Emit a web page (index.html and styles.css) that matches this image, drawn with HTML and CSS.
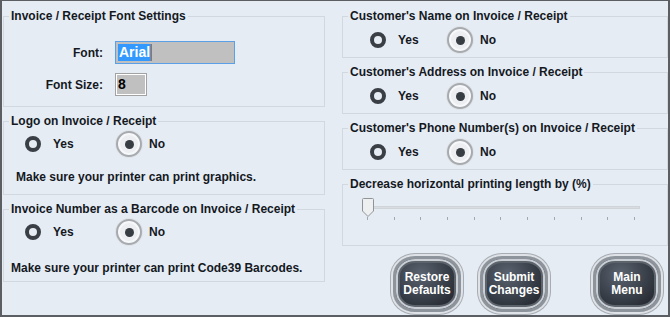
FILE: index.html
```html
<!DOCTYPE html>
<html lang="en">

<head>
    <meta charset="UTF-8">
    <title>Invoice / Receipt Settings</title>
    <link rel="stylesheet" href="styles.css">
</head>

<body>
    <div class="window">
        <div class="column left">
            <fieldset class="group font-group">
                <legend>Invoice / Receipt Font Settings</legend>
                <div class="form-grid">
                    <label for="font">Font:</label>
                    <div class="field field-wide focused" id="font"><span class="selected">Arial</span><span class="caret"></span></div>
                    <label for="fontsize">Font Size:</label>
                    <div class="field field-small" id="fontsize">8</div>
                </div>
            </fieldset>

            <fieldset class="group logo-group">
                <legend>Logo on Invoice / Receipt</legend>
                <div class="radio-row wide">
                    <div class="option"><span class="radio"></span>Yes</div>
                    <div class="option"><span class="radio on"></span>No</div>
                </div>
                <p class="note">Make sure your printer can print graphics.</p>
            </fieldset>

            <fieldset class="group barcode-group">
                <legend>Invoice Number as a Barcode on Invoice / Receipt</legend>
                <div class="radio-row wide">
                    <div class="option"><span class="radio"></span>Yes</div>
                    <div class="option"><span class="radio on"></span>No</div>
                </div>
                <p class="note">Make sure your printer can print Code39 Barcodes.</p>
            </fieldset>
        </div>

        <div class="column right">
            <fieldset class="group small-group">
                <legend>Customer's Name on Invoice / Receipt</legend>
                <div class="radio-row narrow">
                    <div class="option"><span class="radio"></span>Yes</div>
                    <div class="option"><span class="radio on"></span>No</div>
                </div>
            </fieldset>

            <fieldset class="group small-group">
                <legend>Customer's Address on Invoice / Receipt</legend>
                <div class="radio-row narrow">
                    <div class="option"><span class="radio"></span>Yes</div>
                    <div class="option"><span class="radio on"></span>No</div>
                </div>
            </fieldset>

            <fieldset class="group small-group">
                <legend>Customer's Phone Number(s) on Invoice / Receipt</legend>
                <div class="radio-row narrow">
                    <div class="option"><span class="radio"></span>Yes</div>
                    <div class="option"><span class="radio on"></span>No</div>
                </div>
            </fieldset>

            <fieldset class="group slider-group">
                <legend>Decrease horizontal printing length by (%)</legend>
                <div class="slider">
                    <div class="track">
                        <svg class="thumb" width="12" height="19" viewBox="0 0 12 19">
                            <path d="M0.5 1.5 Q0.5 0.5 1.5 0.5 H10.5 Q11.5 0.5 11.5 1.5 V13 L6 18.5 L0.5 13 Z" fill="#eeeff1" stroke="#8f9498" />
                        </svg>
                    </div>
                    <div class="ticks">
                        <span></span><span></span><span></span><span></span><span></span><span></span>
                        <span></span><span></span><span></span><span></span><span></span>
                    </div>
                </div>
            </fieldset>

            <div class="buttons">
                <button class="tv-button restore">Restore<br>Defaults</button>
                <button class="tv-button submit">Submit<br>Changes</button>
                <button class="tv-button menu">Main<br>Menu</button>
            </div>
        </div>
    </div>
</body>

</html>
```

FILE: styles.css
```css
body {
    margin: 0;
    font: bold 11px/14px "Liberation Sans", Arial, sans-serif;
    color: #14191f;
}

.window {
    width: 670px;
    height: 317px;
    box-sizing: border-box;
    background: #e6ecf4;
    border: 2px solid #5b5f64;
    border-top-width: 1px;
    display: grid;
    grid-template-columns: 322px 326px;
    column-gap: 17px;
    padding: 8px 0 0 1px;
}

.column {
    display: flex;
    flex-direction: column;
    gap: 7px;
}

.group {
    margin: 0;
    padding: 0;
    border: 1px solid #d2d8df;
    box-sizing: border-box;
    min-width: 0;
}

.group legend {
    margin-left: 5px;
    padding: 0 2px;
    line-height: 14px;
    font-size: 12px;
}

/* left column */

.font-group {
    height: 98px;
}

.logo-group {
    height: 81px;
}

.barcode-group {
    height: 80px;
}

.form-grid {
    display: grid;
    grid-template-columns: 99px auto;
    column-gap: 12px;
    row-gap: 9px;
    align-items: center;
    justify-items: start;
    margin-top: 18px;
}

.form-grid label {
    justify-self: end;
    font-size: 12px;
}

.field {
    height: 23px;
    box-sizing: border-box;
    background: #c0c0c0;
    border: 1px solid #a2a2a2;
    box-shadow: inset 0 0 0 1px #fff;
    font: bold 14px/19px "Liberation Sans", Arial, sans-serif;
    padding: 1px 2px;
    display: flex;
    align-items: center;
}

.field-wide {
    width: 120px;
}

.field-small {
    width: 32px;
    color: #000;
}

.focused {
    border-color: #5ba0e6;
    box-shadow: none;
}

.selected {
    background: #3399ff;
    color: #fff;
    padding: 0 1px;
    line-height: 17px;
}

.caret {
    width: 1px;
    height: 17px;
    background: #c06a20;
}

.radio-row {
    display: flex;
    margin-top: 3px;
}

.radio-row.wide {
    padding-left: 16px;
}

.radio-row.wide .option:first-child {
    width: 96px;
}

.radio-row.narrow {
    margin-top: 4px;
    padding-left: 22px;
}

.radio-row.narrow .option:first-child {
    width: 82px;
}

.option {
    display: flex;
    align-items: center;
    gap: 7px;
    font-size: 12px;
}

.radio {
    width: 26px;
    height: 26px;
    display: grid;
    place-items: center;
}

.radio::before {
    content: "";
    width: 8px;
    height: 8px;
    border-radius: 50%;
    border: 4px solid #3a3f46;
}

.radio.on {
    border-radius: 50%;
    box-sizing: border-box;
    border: 2px solid #a7abb0;
    background: #eceef1;
    box-shadow: 0 0 0 1px #dfe3e8, inset 0 0 0 2px #f7f8f9;
}

.radio.on::before {
    width: 9px;
    height: 9px;
    border: none;
    background: #383c43;
}

.note {
    margin: 0;
    font-size: 12px;
}

.logo-group .note {
    margin-top: 13px;
    padding-left: 12px;
}

.barcode-group .note {
    margin-top: 16px;
    padding-left: 7px;
}

/* right column */

.small-group {
    height: 49px;
}

.slider-group {
    height: 69px;
}

.slider {
    margin: 15px 0 0 20px;
    width: 277px;
}

.track {
    position: relative;
    height: 3px;
    background: #d9dde2;
    border: 1px solid #cfd4d9;
    box-sizing: border-box;
}

.thumb {
    position: absolute;
    left: -2px;
    top: -9px;
}

.ticks {
    display: flex;
    justify-content: space-between;
    margin: 8px 0 0 4px;
    width: 268px;
}

.ticks span {
    width: 1px;
    height: 3px;
    background: #a3a8ad;
}

.buttons {
    display: flex;
    margin-top: 3px;
}

.tv-button {
    width: 68px;
    height: 56px;
    box-sizing: border-box;
    border-radius: 22px / 20px;
    border: 3px solid #8e949b;
    background: radial-gradient(ellipse at 40% 30%, #5a6370 0%, #2c3139 70%, #1d2127 100%);
    box-shadow: 0 0 0 2px #dfe3e8, 0 0 0 3px #a6acb3, inset 0 0 0 2px #c9ced4, inset 0 0 0 4px #5d636b;
    color: #fff;
    font: bold 12px/13px "Liberation Sans", Arial, sans-serif;
    padding: 0;
}

.restore {
    margin-left: 51px;
}

.submit {
    margin-left: 19px;
}

.menu {
    margin-left: 45px;
}
```
